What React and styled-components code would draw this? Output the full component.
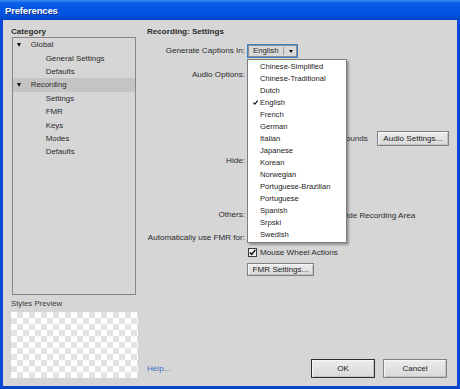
import styled, { createGlobalStyle } from "styled-components";

const GlobalStyle = createGlobalStyle`
  html, body { margin: 0; padding: 0; }
  body {
    font-family: "Liberation Sans", Arial, sans-serif;
    font-size: 8.1px;
    color: #2b2b2b;
    background: #d6d6d6;
  }
`;

const Window = styled.div`
  width: 460px;
  height: 389px;
  display: flex;
  flex-direction: column;
`;

const TitleBar = styled.div`
  height: 20px;
  flex-shrink: 0;
  display: flex;
  align-items: center;
  box-sizing: border-box;
  padding: 1px 0 0 5px;
  background: linear-gradient(180deg, #3a8af6 0%, #0c61e8 14%, #0056e6 45%, #0152df 80%, #0041bd 100%);
  color: #fff;
  font-size: 9.6px;
  font-weight: bold;
  letter-spacing: -0.2px;
  text-shadow: 1px 1px 0 #0b2c8a;
`;

const Frame = styled.div`
  flex: 1;
  min-height: 0;
  display: grid;
  grid-template-columns: 127px 1fr;
  column-gap: 9px;
  padding: 6px 10px 8px 8px;
  background: #d6d6d6;
  border: 3px solid #0a49d8;
  border-top: none;
  border-bottom-color: #0842c8;
`;

const Sidebar = styled.div`
  display: flex;
  flex-direction: column;
`;

const GroupTitle = styled.div`
  font-weight: bold;
  height: 11px;
  line-height: 11px;
  white-space: nowrap;
`;

const Tree = styled.div`
  margin-left: 1px;
  width: 124px;
  height: 258px;
  box-sizing: border-box;
  border: 1px solid #878787;
`;

const TreeRow = styled.div`
  height: 13.4px;
  display: flex;
  align-items: center;
  padding-left: ${(p) => (p.$child ? "32.7px" : "4px")};
  background: ${(p) => (p.$selected ? "#c4c4c4" : "transparent")};
  font-size: 7.9px;
  white-space: nowrap;
`;

const Caret = styled.span`
  width: 0;
  height: 0;
  border-left: 2.5px solid transparent;
  border-right: 2.5px solid transparent;
  border-top: 4px solid #111;
  margin-right: 9.7px;
`;

const PreviewLabel = styled.div`
  margin-top: 3px;
  height: 11px;
  line-height: 11px;
  font-size: 7.8px;
  color: #3a3a3a;
`;

const Preview = styled.div`
  margin-top: 3px;
  height: 66px;
  background: conic-gradient(#e3e3e3 25%, #fff 0 50%, #e3e3e3 0 75%, #fff 0) 0 0 / 12px 12px;
`;

const Main = styled.div`
  display: flex;
  flex-direction: column;
  min-width: 0;
`;

const Field = styled.div`
  display: grid;
  grid-template-columns: 98px 1fr;
  column-gap: 3px;
  align-items: start;
  margin-top: ${(p) => p.$top}px;
`;

const FieldLabel = styled.div`
  text-align: right;
  white-space: nowrap;
  line-height: ${(p) => p.$h || 12.4}px;
`;

const Controls = styled.div`
  display: flex;
  flex-direction: column;
  gap: ${(p) => p.$gap || 0}px;
  align-items: flex-start;
`;

const CheckRow = styled.div`
  height: ${(p) => p.$h || 12.4}px;
  display: flex;
  align-items: center;
  gap: 3px;
  white-space: nowrap;
`;

const Box = styled.span`
  width: 9px;
  height: 9px;
  box-sizing: border-box;
  border: 1px solid #3c3c3c;
  background: #f4f4f4;
  display: flex;
  align-items: center;
  justify-content: center;
  flex-shrink: 0;
`;

const Button = styled.div`
  width: ${(p) => p.$w}px;
  height: ${(p) => p.$h}px;
  box-sizing: border-box;
  display: flex;
  align-items: center;
  justify-content: center;
  border: 1px solid ${(p) => (p.$default ? "#2f2f2f" : "#808080")};
  box-shadow: inset 1px 1px 0 #f6f6f6, inset -1px -1px 0 #c2c2c2;
  background: linear-gradient(180deg, #ececec, #d9d9d9);
  color: #222;
  white-space: nowrap;
`;

const SideButton = styled(Button)`
  margin-left: 6px;
`;

const FmrButton = styled(Button)`
  margin: 2.4px 0 0 -1px;
`;

const ComboWrap = styled.div`
  position: relative;
  margin-left: -1px;
`;

const Combo = styled.div`
  width: 51px;
  height: 14px;
  box-sizing: border-box;
  display: flex;
  border: 1px solid #3a80c6;
  box-shadow: inset 0 0 0 1px #8d8d8d;
  background: #d9d9d9;
`;

const ComboValue = styled.span`
  flex: 1;
  padding-left: 5px;
  line-height: 12px;
  font-size: 7.8px;
`;

const ComboSep = styled.span`
  width: 1px;
  margin: 2px 0;
  background: #9a9a9a;
`;

const ComboArrow = styled.span`
  width: 13px;
  display: flex;
  align-items: center;
  justify-content: center;
  &::after {
    content: "";
    border-left: 2.5px solid transparent;
    border-right: 2.5px solid transparent;
    border-top: 3.5px solid #111;
  }
`;

const Popup = styled.div`
  position: absolute;
  top: calc(100% + 1px);
  left: 0;
  width: 100px;
  box-sizing: border-box;
  padding: 0 0 2px;
  border: 1px solid #7d7d7d;
  background: #fff;
  box-shadow: 2px 2px 2px rgba(0, 0, 0, 0.3);
  z-index: 5;
`;

const Option = styled.div`
  height: 12px;
  display: flex;
  align-items: center;
  padding-left: 4px;
  font-size: 7.6px;
  color: #222;
  white-space: nowrap;
`;

const CheckSlot = styled.span`
  width: 8px;
  display: flex;
  align-items: center;
`;

const Footer = styled.div`
  margin-top: auto;
  display: flex;
  align-items: center;
  gap: 8px;
`;

const HelpLink = styled.span`
  color: #3a6fc4;
  flex: 1;
`;

const languages = [
  "Chinese-Simplified",
  "Chinese-Traditional",
  "Dutch",
  "English",
  "French",
  "German",
  "Italian",
  "Japanese",
  "Korean",
  "Norwegian",
  "Portuguese-Brazilian",
  "Portuguese",
  "Spanish",
  "Srpski",
  "Swedish",
];

const Check = ({ checked }) => (
  <Box>
    {checked && (
      <svg width="7" height="7" viewBox="0 0 7 7">
        <path d="M0.8 3.4 L2.7 5.4 L6.3 0.9" fill="none" stroke="#111" strokeWidth="1.5" />
      </svg>
    )}
  </Box>
);

const LanguageOption = ({ label, selected }) => (
  <Option>
    <CheckSlot>
      {selected && (
        <svg width="5" height="5" viewBox="0 0 5 5" style={{ marginLeft: 1 }}>
          <path d="M0.4 2.6 L1.8 4.1 L4.7 0.6" fill="none" stroke="#111" strokeWidth="1.2" />
        </svg>
      )}
    </CheckSlot>
    {label}
  </Option>
);

export default function App() {
  return (
    <>
      <GlobalStyle />
      <Window>
        <TitleBar>Preferences</TitleBar>
        <Frame>
          <Sidebar>
            <GroupTitle>Category</GroupTitle>
            <Tree>
              <TreeRow><Caret />Global</TreeRow>
              <TreeRow $child>General Settings</TreeRow>
              <TreeRow $child>Defaults</TreeRow>
              <TreeRow $selected><Caret />Recording</TreeRow>
              <TreeRow $child>Settings</TreeRow>
              <TreeRow $child>FMR</TreeRow>
              <TreeRow $child>Keys</TreeRow>
              <TreeRow $child>Modes</TreeRow>
              <TreeRow $child>Defaults</TreeRow>
            </Tree>
            <PreviewLabel>Styles Preview</PreviewLabel>
            <Preview />
          </Sidebar>

          <Main>
            <GroupTitle>Recording: Settings</GroupTitle>

            <Field $top={7}>
              <FieldLabel $h={14}>Generate Captions In:</FieldLabel>
              <Controls>
                <ComboWrap>
                  <Combo>
                    <ComboValue>English</ComboValue>
                    <ComboSep />
                    <ComboArrow />
                  </Combo>
                  <Popup>
                    {languages.map((l) => (
                      <LanguageOption key={l} label={l} selected={l === "English"} />
                    ))}
                  </Popup>
                </ComboWrap>
              </Controls>
            </Field>

            {/* rows behind the open list only show their tail ends */}
            <Field $top={10.8}>
              <FieldLabel>Audio Options:</FieldLabel>
              <Controls>
                <CheckRow><Check /></CheckRow>
                <CheckRow><Check /></CheckRow>
                <CheckRow><Check checked /></CheckRow>
                <CheckRow><Check checked /></CheckRow>
                <CheckRow><Check /></CheckRow>
                <CheckRow $h={15}>
                  <Check checked />Record Keyboard Tap Sounds
                  <SideButton $w={72} $h={15}>Audio Settings...</SideButton>
                </CheckRow>
              </Controls>
            </Field>

            <Field $top={9}>
              <FieldLabel>Hide:</FieldLabel>
              <Controls>
                <CheckRow><Check checked /></CheckRow>
                <CheckRow><Check /></CheckRow>
                <CheckRow><Check checked /></CheckRow>
                <CheckRow><Check /></CheckRow>
              </Controls>
            </Field>

            <Field $top={5.1}>
              <FieldLabel>Others:</FieldLabel>
              <Controls>
                <CheckRow><Check checked />Move New Windows Inside Recording Area</CheckRow>
              </Controls>
            </Field>

            <Field $top={10.2}>
              <FieldLabel>Automatically use FMR for:</FieldLabel>
              <Controls $gap={2}>
                <CheckRow><Check checked /></CheckRow>
                <CheckRow><Check checked />Mouse Wheel Actions</CheckRow>
                <FmrButton $w={67} $h={13}>FMR Settings...</FmrButton>
              </Controls>
            </Field>

            <Footer>
              <HelpLink>Help...</HelpLink>
              <Button $default $w={64} $h={19}>OK</Button>
              <Button $w={64} $h={19}>Cancel</Button>
            </Footer>
          </Main>
        </Frame>
      </Window>
    </>
  );
}
